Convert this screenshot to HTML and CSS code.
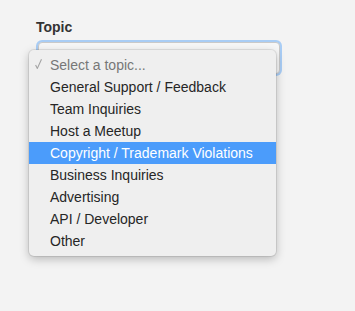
FILE: index.html
```html
<!DOCTYPE html>
<html>
<head>
<meta charset="utf-8">
<link rel="stylesheet" href="styles.css">
</head>
<body>
<div class="field">
  <div class="label">Topic</div>
  <div class="select"></div>
  <div class="menu">
    <div class="item placeholder"><svg class="check" width="7" height="10" viewBox="0 0 7 10"><path d="M0.6 6 L2.3 9.4 L6.5 0.3" fill="none" stroke="#a3a3a3" stroke-width="1.1"/></svg>Select a topic...</div>
    <div class="item">General Support / Feedback</div>
    <div class="item">Team Inquiries</div>
    <div class="item">Host a Meetup</div>
    <div class="item active">Copyright / Trademark Violations</div>
    <div class="item">Business Inquiries</div>
    <div class="item">Advertising</div>
    <div class="item">API / Developer</div>
    <div class="item">Other</div>
  </div>
</div>
</body>
</html>
```
FILE: styles.css
```css
html, body {
  margin: 0;
  padding: 0;
  background: #f3f3f3;
  font-family: "Liberation Sans", Arial, sans-serif;
}
body {
  min-height: 311px;
}
.field {
  position: relative;
  min-height: 292px;
  padding: 19px 0 0 36px;
}
.label {
  font-size: 14px;
  font-weight: bold;
  color: #333;
  line-height: 17px;
  margin-bottom: 6px;
}
.select {
  width: 240px;
  height: 30px;
  border: 1px solid #c9c9c9;
  border-radius: 4px;
  background: #f7f7f7;
  box-shadow: 0 0 0 2px #a9cdf5;
  margin-left: 2px;
}
.menu {
  position: absolute;
  left: 29px;
  top: 50px;
  width: 247px;
  padding: 4px 0;
  background: #efefef;
  border-radius: 5px;
  box-shadow: 0 0 0 1px rgba(0,0,0,0.08), 0 3px 10px rgba(0,0,0,0.25);
}
.item {
  position: relative;
  height: 22px;
  line-height: 22px;
  padding-left: 21px;
  font-size: 14px;
  color: #262626;
}
.placeholder {
  color: #777;
}
.check {
  position: absolute;
  left: 6px;
  top: 5px;
}
.active {
  background: #4b9cfb;
  color: #fff;
}
```
